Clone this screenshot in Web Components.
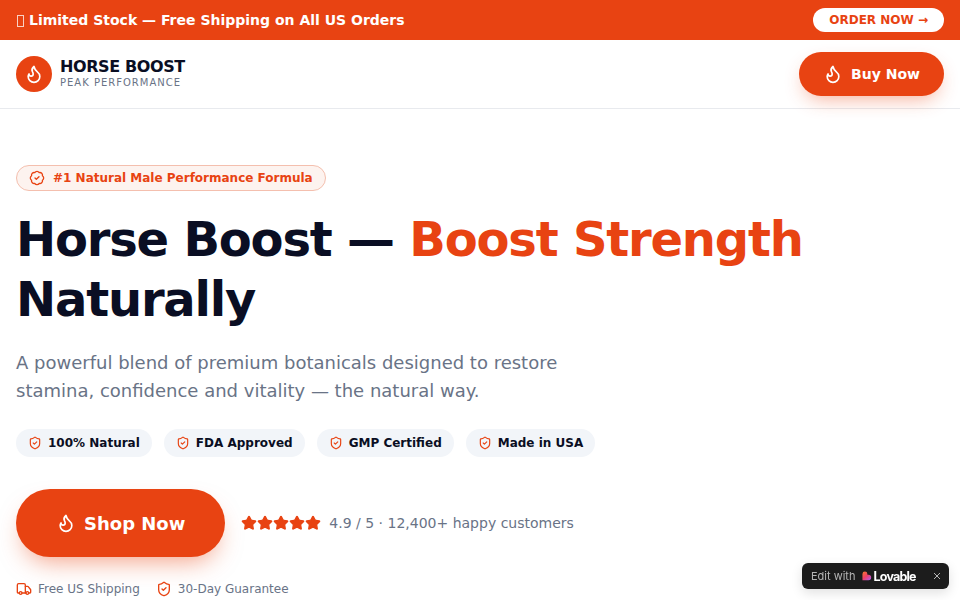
<!DOCTYPE html>
<html lang="en"><head><meta charset="utf-8"><title>Horse Boost</title>
<style>
html,body{margin:0;padding:0;background:#fff;height:600px;overflow:hidden}
body{font-family:"DejaVu Sans",sans-serif;color:#0a0e23}
</style></head><body>
<promo-bar></promo-bar>
<site-header></site-header>
<hero-section></hero-section>
<lovable-badge></lovable-badge>
<script>
const P={
flame:'<path d="M8.5 14.5A2.5 2.5 0 0 0 11 12c0-1.38-.5-2-1-3-1.072-2.143-.224-4.054 2-6 .5 2.5 2 4.9 4 6.5 2 1.6 3 3.5 3 5.5a7 7 0 1 1-14 0c0-1.153.433-2.294 1-3a2.5 2.5 0 0 0 2.5 2.5z"/>',
badge:'<path d="M3.85 8.62a4 4 0 0 1 4.78-4.77 4 4 0 0 1 6.74 0 4 4 0 0 1 4.78 4.78 4 4 0 0 1 0 6.74 4 4 0 0 1-4.77 4.78 4 4 0 0 1-6.75 0 4 4 0 0 1-4.78-4.77 4 4 0 0 1 0-6.76Z"/><path d="m9 12 2 2 4-4"/>',
shield:'<path d="M20 13c0 5-3.5 7.5-7.66 8.95a1 1 0 0 1-.67-.01C7.5 20.5 4 18 4 13V6a1 1 0 0 1 1-1c2 0 4.5-1.2 6.24-2.72a1.17 1.17 0 0 1 1.52 0C14.51 3.81 17 5 19 5a1 1 0 0 1 1 1z"/><path d="m9 12 2 2 4-4"/>',
truck:'<path d="M14 18V6a2 2 0 0 0-2-2H4a2 2 0 0 0-2 2v11a1 1 0 0 0 1 1h2"/><path d="M15 18H9"/><path d="M19 18h2a1 1 0 0 0 1-1v-3.65a1 1 0 0 0-.22-.624l-3.48-4.35A1 1 0 0 0 17.52 8H14"/><circle cx="17" cy="18" r="2"/><circle cx="7" cy="18" r="2"/>',
star:'<path d="M11.525 2.295a.53.53 0 0 1 .95 0l2.31 4.679a2.123 2.123 0 0 0 1.595 1.16l5.166.756a.53.53 0 0 1 .294.904l-3.736 3.638a2.123 2.123 0 0 0-.611 1.878l.882 5.14a.53.53 0 0 1-.771.56l-4.618-2.428a2.122 2.122 0 0 0-1.973 0L6.396 21.01a.53.53 0 0 1-.77-.56l.881-5.139a2.122 2.122 0 0 0-.611-1.879L2.16 9.795a.53.53 0 0 1 .294-.906l5.165-.755a2.122 2.122 0 0 0 1.597-1.16z"/>'
};
const icon=(n,s,c='currentColor',f='none')=>`<svg xmlns="http://www.w3.org/2000/svg" width="${s}" height="${s}" viewBox="0 0 24 24" fill="${f}" stroke="${c}" stroke-width="2" stroke-linecap="round" stroke-linejoin="round" style="display:block;flex:none">${P[n]}</svg>`;
class Base extends HTMLElement{
  connectedCallback(){ if(!this.shadowRoot){this.attachShadow({mode:'open'}).innerHTML=this.render();} }
}
customElements.define('promo-bar',class extends Base{render(){return `<style>
:host{display:flex;align-items:center;justify-content:space-between;height:40px;padding:0 16px;box-sizing:border-box;background:#e84312;color:#fff}
.t{font-size:14px;font-weight:700;display:flex;align-items:center}
.tofu{display:block;width:7px;height:12px;box-sizing:border-box;border:1px solid rgba(255,255,255,.75);margin:1px 5px 0 1px;flex:none}
a{display:block;background:#fff;color:#e84312;font-size:12px;font-weight:700;line-height:16px;padding:4px 16px;border-radius:999px}
</style><span class="t"><i class="tofu"></i><span>Limited Stock — Free Shipping on All US Orders</span></span><a>ORDER NOW →</a>`}});
customElements.define('site-header',class extends Base{render(){return `<style>
:host{display:flex;align-items:center;justify-content:space-between;height:69px;padding:0 16px;box-sizing:border-box;background:#fff;border-bottom:1px solid #e8eaee}
.l{display:flex;align-items:center;gap:8px}
.c{width:36px;height:36px;border-radius:50%;background:#e84312;color:#fff;display:flex;align-items:center;justify-content:center}
.n{font-size:16px;font-weight:700;line-height:16px;letter-spacing:-.4px}
.s{font-size:10px;line-height:12px;letter-spacing:1px;color:#697386;margin-top:2px}
.b{display:flex;align-items:center;gap:8px;height:44px;box-sizing:border-box;padding:0 24px;border-radius:999px;background:#e84312;color:#fff;font-size:14px;font-weight:700;box-shadow:0 8px 20px -6px rgba(234,67,16,.45)}
</style><div class="l"><div class="c">${icon('flame',20)}</div><div><div class="n">HORSE BOOST</div><div class="s">PEAK PERFORMANCE</div></div></div>
<div class="b">${icon('flame',20)}<span>Buy Now</span></div>`}});
customElements.define('trust-chip',class extends Base{render(){return `<style>
:host{display:flex;align-items:center;gap:6px;height:28px;box-sizing:border-box;padding:0 12px;border-radius:999px;background:#f2f5f9;color:#0a0e23;font-size:12px;font-weight:700}
svg{color:#e84312}
</style>${icon('shield',14)}<slot></slot>`}});
customElements.define('hero-section',class extends Base{render(){return `<style>
:host{display:block;padding:56px 16px 0;box-sizing:border-box}
.badge{display:inline-flex;align-items:center;gap:8px;height:26px;box-sizing:border-box;padding:0 12px;border:1px solid #f4bfae;border-radius:999px;background:#fdf3ef;color:#e84312;font-size:12px;font-weight:700;vertical-align:top}
h1{margin:18px 0 0;font-size:48px;line-height:60px;font-weight:700;color:#0a0e23;letter-spacing:-1.2px}
h1 em{font-style:normal;color:#e84312}
p{margin:20px 0 0;font-size:18px;line-height:28px;color:#697386;max-width:576px}
.chips{display:flex;gap:12px;margin-top:24px}
.cta{display:flex;align-items:center;gap:16px;margin-top:32px}
.shop{display:flex;align-items:center;gap:8px;height:68px;box-sizing:border-box;padding:0 40px;border-radius:999px;background:#e84312;color:#fff;font-size:18px;font-weight:700;box-shadow:0 12px 24px -8px rgba(234,67,16,.5)}
.stars{display:flex;color:#e84312}
.r{font-size:14px;color:#697386}
.rate{display:flex;align-items:center;gap:8px}
.ft{display:flex;gap:16px;margin-top:24px;font-size:12px;line-height:16px;color:#697386}
.ft div{display:flex;align-items:center;gap:6px}
.ft svg{color:#e84312}
</style>
<div class="badge">${icon('badge',16)}<span>#1 Natural Male Performance Formula</span></div>
<h1>Horse Boost — <em>Boost Strength</em> Naturally</h1>
<p>A powerful blend of premium botanicals designed to restore stamina, confidence and vitality — the natural way.</p>
<div class="chips"><trust-chip>100% Natural</trust-chip><trust-chip>FDA Approved</trust-chip><trust-chip>GMP Certified</trust-chip><trust-chip>Made in USA</trust-chip></div>
<div class="cta"><div class="shop">${icon('flame',20)}<span>Shop Now</span></div>
<div class="rate"><div class="stars">${Array(5).fill(icon('star',16,'currentColor','currentColor')).join('')}</div><span class="r">4.9 / 5 · 12,400+ happy customers</span></div></div>
<div class="ft"><div>${icon('truck',16)}<span>Free US Shipping</span></div><div>${icon('shield',16)}<span>30-Day Guarantee</span></div></div>`}});
customElements.define('lovable-badge',class extends Base{render(){return `<style>
:host{position:fixed;left:802px;top:563px;width:147px;height:26px;box-sizing:border-box;padding:0 8.5px 0 9px;display:flex;align-items:center;border-radius:6px;background:#1c1c1c;color:#fff;font-family:Inter,sans-serif;box-shadow:0 4px 12px rgba(0,0,0,.12)}
.e{font-size:11px;color:#b5b5b5}
.h{margin-left:7px;flex:none}
.w{font-size:12.5px;font-weight:700;letter-spacing:-.8px;margin-left:1px}
.x{margin-left:auto;color:#b5b5b5}
</style><span class="e">Edit with</span>
<svg class="h" width="10" height="10" viewBox="0 0 11 11"><defs><linearGradient id="g" x1="0" y1="0" x2=".8" y2="1"><stop offset="0" stop-color="#f8792f"/><stop offset=".55" stop-color="#ef3f68"/><stop offset="1" stop-color="#b65be0"/></linearGradient></defs><path d="M3.2.5a2.7 2.7 0 0 1 2.7 2.7v.9h1.2a3 3 0 0 1 0 6H.5V3.2A2.7 2.7 0 0 1 3.2.5z" fill="url(#g)"/></svg>
<span class="w">Lovable</span>
<svg class="x" width="8" height="8" viewBox="0 0 8 8" fill="none" stroke="currentColor" stroke-width="1"><path d="M1 1l6 6M7 1L1 7"/></svg>`}});
</script>
</body></html>
